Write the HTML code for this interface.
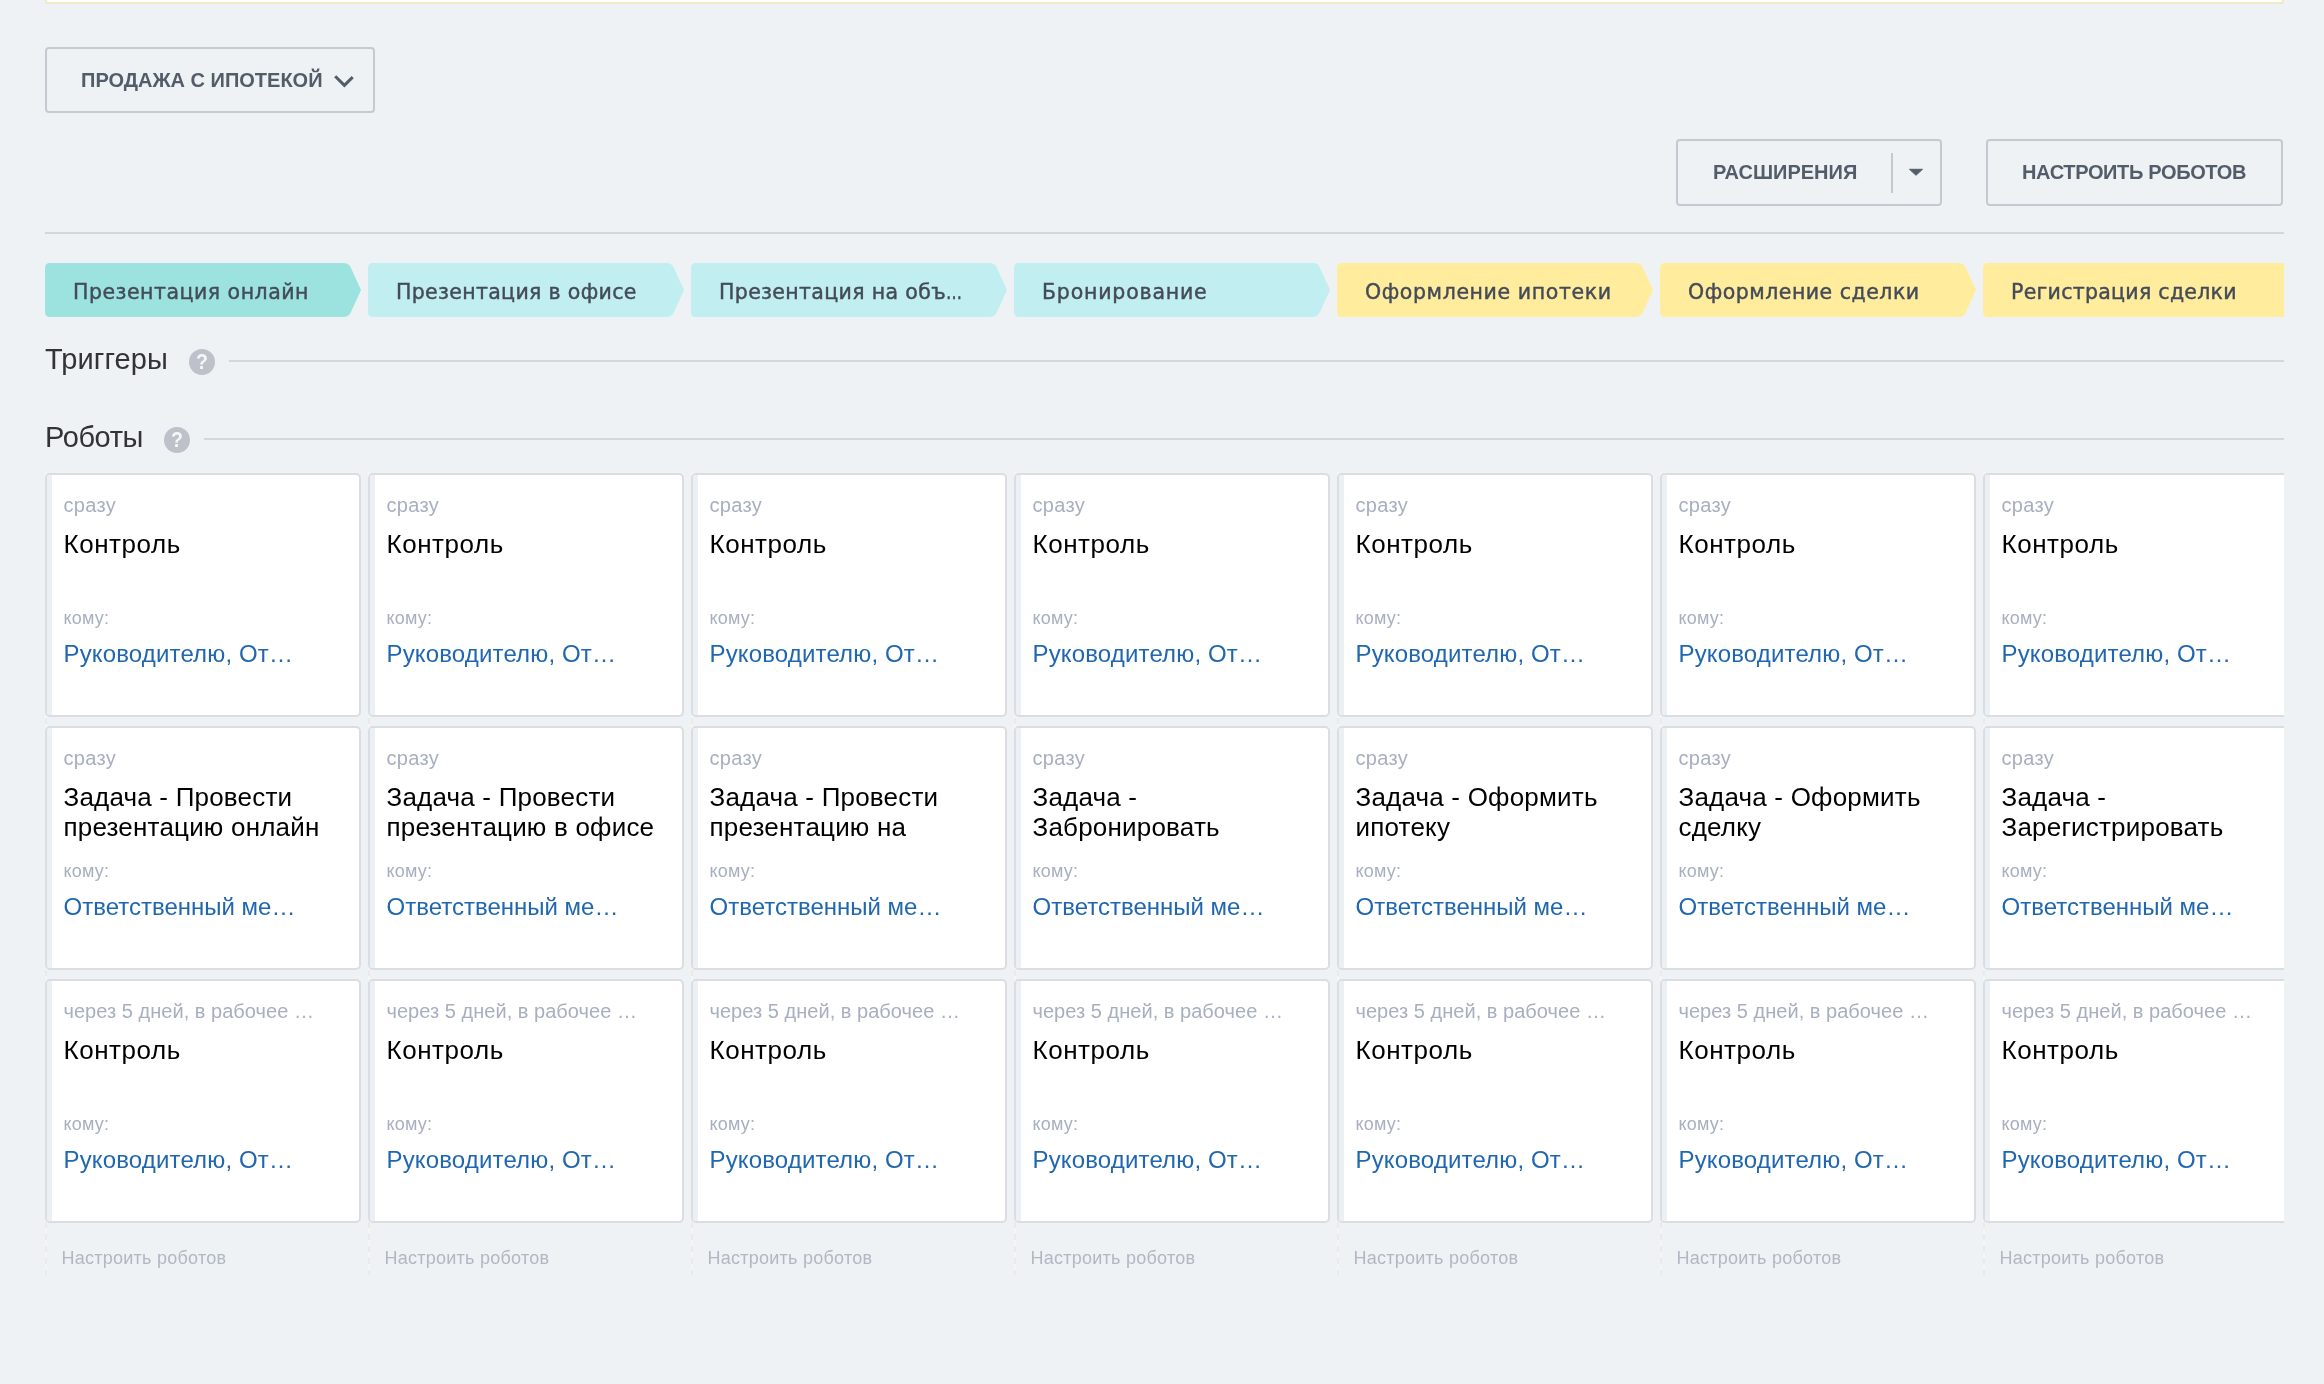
<!DOCTYPE html>
<html lang="ru">
<head>
<meta charset="utf-8">
<title>Роботы</title>
<style>
*{box-sizing:border-box;margin:0;padding:0}
html,body{width:2324px;height:1384px;overflow:hidden}
body{background:#eef2f4;font-family:"Liberation Sans",Arial,sans-serif;color:#333;position:relative}
.wrap{position:absolute;left:45px;top:0;width:2239px;height:1384px;overflow:hidden;will-change:transform}
.notice{position:absolute;left:0;top:-40px;width:2239px;height:44px;border:2px solid #efebca;background:#fffffa}
.btn{position:absolute;height:66px;border:2px solid #c4cad2;border-radius:4px;font-weight:bold;font-size:20px;line-height:62px;color:#535c69;white-space:nowrap}
.btn span{position:absolute;top:0}
.btn-cat{left:0;top:47px;width:330px}
.btn-cat span{left:34px}
.btn-cat svg{position:absolute;left:286.5px;top:25.5px}
.btn-ext{left:1631px;top:139px;width:266px;height:67px;line-height:61px}
.btn-ext span{left:35px;top:1px}
.btn-ext i{position:absolute;left:213px;top:12px;width:2px;height:40px;background:#c3c9d0}
.btn-ext svg{position:absolute;left:230px;top:27px}
.btn-rob{left:1941px;top:139px;width:297px;height:67px;line-height:61px}
.btn-rob span{left:34px;top:1px;letter-spacing:-0.35px}
.hr{position:absolute;left:0;top:232px;width:2239px;height:2px;background:#d3d7da}
.stages{position:absolute;left:0;top:263px;height:54px;width:2400px}
.stage{position:absolute;top:0;width:316px;height:54px;font-family:"DejaVu Sans","Liberation Sans",sans-serif;font-size:20.5px;line-height:54px;color:#444b58;white-space:nowrap;-webkit-text-stroke:.42px #444b58}
.stage svg{position:absolute;left:0;top:0}
.stage span{position:absolute;left:28px;top:1.5px;letter-spacing:.5px}
.stage i{font-style:normal;display:inline-block;transform:scaleX(.78);transform-origin:0 50%}
.sec{position:absolute;left:0;height:40px;width:2239px}
.sec h2{position:absolute;left:0;top:-3px;font-weight:normal;font-size:29px;line-height:40px;color:#333;white-space:nowrap}
.sec .q{position:absolute;top:7px;width:26px;height:26px;border-radius:50%;background:#bdc2ca;color:#f6f7f9;font-weight:bold;font-size:22.2px;line-height:26.6px;text-align:center}
.sec .q b{display:block;transform:scaleX(.88)}
.sec .ln{position:absolute;top:18px;right:0;height:2px;background:#d5d8db}
.col{position:absolute;top:473px;width:316px;height:800px}
.col:before{content:"";position:absolute;left:0;top:-1px;width:2px;height:803px;background:repeating-linear-gradient(180deg,#f5f5f5 0,#f5f5f5 6px,#e9eaeb 6px,#e9eaeb 12px)}
.card{position:absolute;left:0;width:316px;height:244px;background:#fff;border:2px solid #dcdde2;border-radius:5px;overflow:hidden}
.card:before{content:"";position:absolute;left:0;top:0;bottom:0;width:5px;background:#ebf0f5}
.card div{position:absolute;left:16.5px;width:270px;white-space:nowrap;overflow:hidden}
.card .t{top:18px;font-size:20px;line-height:24px;color:#a8afc0;letter-spacing:.3px}
.card .n{top:53.5px;font-size:26px;line-height:30px;color:#000;white-space:normal;height:60px;letter-spacing:.55px;width:290px}
.card .k{top:132px;font-size:18px;line-height:22px;color:#a8afc0;letter-spacing:.2px}
.card .l{top:164.5px;font-size:24px;line-height:28px;color:#2067b0;letter-spacing:.15px}
.card .n2{letter-spacing:.2px}.card .l2{letter-spacing:0}.card .t2{letter-spacing:.03px}
.r1{top:0}.r2{top:253px}.r3{top:506px}
.cfg{position:absolute;left:16.5px;top:774px;font-size:18px;line-height:22px;color:#b1b7c3;white-space:nowrap;letter-spacing:.25px}
</style>
</head>
<body>
<div class="wrap">
<div class="notice"></div>
<div class="btn btn-cat"><span>ПРОДАЖА С ИПОТЕКОЙ</span><svg width="22" height="14" viewBox="0 0 22 14"><path d="M1.2 1.2 L10.4 10.4 L18.7 2.1" fill="none" stroke="#535c69" stroke-width="3"/></svg></div>
<div class="btn btn-ext"><span>РАСШИРЕНИЯ</span><i></i><svg width="16" height="9" viewBox="0 0 16 9"><path d="M1.5 1.3 H14.5 L8 7.3 Z" fill="#535c69" stroke="#535c69" stroke-width="1" stroke-linejoin="round"/></svg></div>
<div class="btn btn-rob"><span>НАСТРОИТЬ РОБОТОВ</span></div>
<div class="hr"></div>
<div class="stages" id="stages">
<div class="stage" style="left:0px"><svg width="316" height="54" viewBox="0 0 316 54"><path d="M5 0H298Q303.5 0 305.5 4L316 27L305.5 50Q303.5 54 298 54H5Q0 54 0 49V5Q0 0 5 0Z" fill="#9ce3df"/></svg><span style="letter-spacing:0.5px">Презентация онлайн</span></div>
<div class="stage" style="left:323px"><svg width="316" height="54" viewBox="0 0 316 54"><path d="M5 0H298Q303.5 0 305.5 4L316 27L305.5 50Q303.5 54 298 54H5Q0 54 0 49V5Q0 0 5 0Z" fill="#c1eef0"/></svg><span style="letter-spacing:0.33px">Презентация в офисе</span></div>
<div class="stage" style="left:646px"><svg width="316" height="54" viewBox="0 0 316 54"><path d="M5 0H298Q303.5 0 305.5 4L316 27L305.5 50Q303.5 54 298 54H5Q0 54 0 49V5Q0 0 5 0Z" fill="#c1eef0"/></svg><span style="letter-spacing:0.35px">Презентация на объ<i>…</i></span></div>
<div class="stage" style="left:969px"><svg width="316" height="54" viewBox="0 0 316 54"><path d="M5 0H298Q303.5 0 305.5 4L316 27L305.5 50Q303.5 54 298 54H5Q0 54 0 49V5Q0 0 5 0Z" fill="#c1eef0"/></svg><span style="letter-spacing:0.8px">Бронирование</span></div>
<div class="stage" style="left:1292px"><svg width="316" height="54" viewBox="0 0 316 54"><path d="M5 0H298Q303.5 0 305.5 4L316 27L305.5 50Q303.5 54 298 54H5Q0 54 0 49V5Q0 0 5 0Z" fill="#ffed9d"/></svg><span style="letter-spacing:0.6px">Оформление ипотеки</span></div>
<div class="stage" style="left:1615px"><svg width="316" height="54" viewBox="0 0 316 54"><path d="M5 0H298Q303.5 0 305.5 4L316 27L305.5 50Q303.5 54 298 54H5Q0 54 0 49V5Q0 0 5 0Z" fill="#ffed9d"/></svg><span style="letter-spacing:0.5px">Оформление сделки</span></div>
<div class="stage" style="left:1938px"><svg width="316" height="54" viewBox="0 0 316 54"><path d="M5 0H298Q303.5 0 305.5 4L316 27L305.5 50Q303.5 54 298 54H5Q0 54 0 49V5Q0 0 5 0Z" fill="#ffed9d"/></svg><span style="letter-spacing:0.28px">Регистрация сделки</span></div>
</div><!--/stages-->
<div class="sec" style="top:342px"><h2 style="letter-spacing:.12px">Триггеры</h2><div class="q" style="left:144px"><b>?</b></div><div class="ln" style="left:184px"></div></div>
<div class="sec" style="top:420px"><h2 style="letter-spacing:-.4px">Роботы</h2><div class="q" style="left:119px"><b>?</b></div><div class="ln" style="left:159px"></div></div>
<div id="cols">
<div class="col" style="left:0px">
<div class="card r1"><div class="t">сразу</div><div class="n">Контроль</div><div class="k">кому:</div><div class="l">Руководителю, От…</div></div>
<div class="card r2"><div class="t">сразу</div><div class="n n2">Задача - Провести<br>презентацию онлайн</div><div class="k">кому:</div><div class="l l2">Ответственный ме…</div></div>
<div class="card r3"><div class="t t2">через 5 дней, в рабочее …</div><div class="n">Контроль</div><div class="k">кому:</div><div class="l">Руководителю, От…</div></div>
<div class="cfg">Настроить роботов</div>
</div>
<div class="col" style="left:323px">
<div class="card r1"><div class="t">сразу</div><div class="n">Контроль</div><div class="k">кому:</div><div class="l">Руководителю, От…</div></div>
<div class="card r2"><div class="t">сразу</div><div class="n n2">Задача - Провести<br>презентацию в офисе</div><div class="k">кому:</div><div class="l l2">Ответственный ме…</div></div>
<div class="card r3"><div class="t t2">через 5 дней, в рабочее …</div><div class="n">Контроль</div><div class="k">кому:</div><div class="l">Руководителю, От…</div></div>
<div class="cfg">Настроить роботов</div>
</div>
<div class="col" style="left:646px">
<div class="card r1"><div class="t">сразу</div><div class="n">Контроль</div><div class="k">кому:</div><div class="l">Руководителю, От…</div></div>
<div class="card r2"><div class="t">сразу</div><div class="n n2">Задача - Провести<br>презентацию на<br>объекте</div><div class="k">кому:</div><div class="l l2">Ответственный ме…</div></div>
<div class="card r3"><div class="t t2">через 5 дней, в рабочее …</div><div class="n">Контроль</div><div class="k">кому:</div><div class="l">Руководителю, От…</div></div>
<div class="cfg">Настроить роботов</div>
</div>
<div class="col" style="left:969px">
<div class="card r1"><div class="t">сразу</div><div class="n">Контроль</div><div class="k">кому:</div><div class="l">Руководителю, От…</div></div>
<div class="card r2"><div class="t">сразу</div><div class="n n2">Задача -<br>Забронировать<br>квартиру</div><div class="k">кому:</div><div class="l l2">Ответственный ме…</div></div>
<div class="card r3"><div class="t t2">через 5 дней, в рабочее …</div><div class="n">Контроль</div><div class="k">кому:</div><div class="l">Руководителю, От…</div></div>
<div class="cfg">Настроить роботов</div>
</div>
<div class="col" style="left:1292px">
<div class="card r1"><div class="t">сразу</div><div class="n">Контроль</div><div class="k">кому:</div><div class="l">Руководителю, От…</div></div>
<div class="card r2"><div class="t">сразу</div><div class="n n2">Задача - Оформить<br>ипотеку</div><div class="k">кому:</div><div class="l l2">Ответственный ме…</div></div>
<div class="card r3"><div class="t t2">через 5 дней, в рабочее …</div><div class="n">Контроль</div><div class="k">кому:</div><div class="l">Руководителю, От…</div></div>
<div class="cfg">Настроить роботов</div>
</div>
<div class="col" style="left:1615px">
<div class="card r1"><div class="t">сразу</div><div class="n">Контроль</div><div class="k">кому:</div><div class="l">Руководителю, От…</div></div>
<div class="card r2"><div class="t">сразу</div><div class="n n2">Задача - Оформить<br>сделку</div><div class="k">кому:</div><div class="l l2">Ответственный ме…</div></div>
<div class="card r3"><div class="t t2">через 5 дней, в рабочее …</div><div class="n">Контроль</div><div class="k">кому:</div><div class="l">Руководителю, От…</div></div>
<div class="cfg">Настроить роботов</div>
</div>
<div class="col" style="left:1938px">
<div class="card r1"><div class="t">сразу</div><div class="n">Контроль</div><div class="k">кому:</div><div class="l">Руководителю, От…</div></div>
<div class="card r2"><div class="t">сразу</div><div class="n n2">Задача -<br>Зарегистрировать<br>сделку</div><div class="k">кому:</div><div class="l l2">Ответственный ме…</div></div>
<div class="card r3"><div class="t t2">через 5 дней, в рабочее …</div><div class="n">Контроль</div><div class="k">кому:</div><div class="l">Руководителю, От…</div></div>
<div class="cfg">Настроить роботов</div>
</div>
</div><!--/cols-->
</div>
</body>
</html>
